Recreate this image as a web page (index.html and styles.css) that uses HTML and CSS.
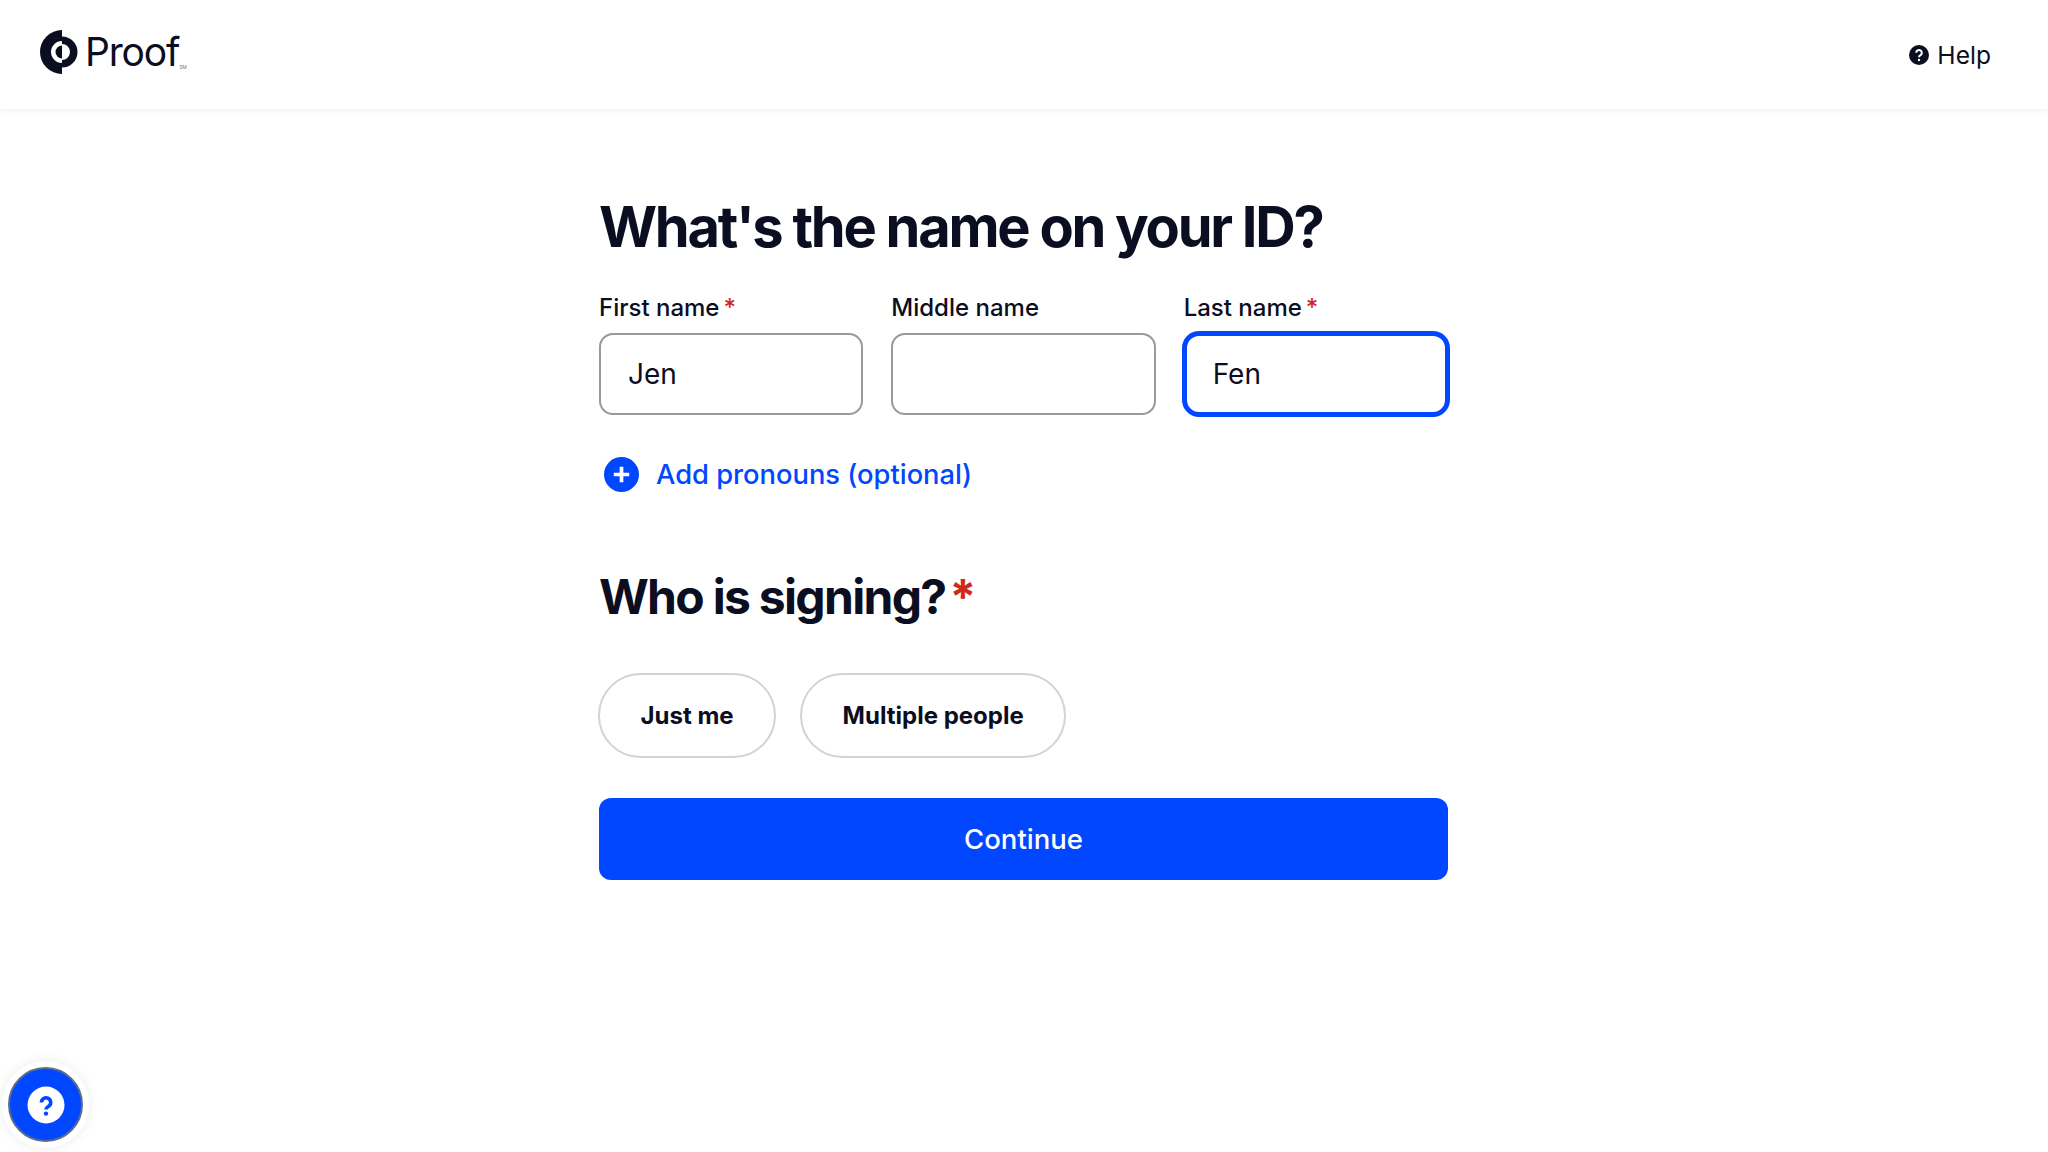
FILE: index.html
```html
<!DOCTYPE html>
<html lang="en">
<head>
  <meta charset="UTF-8">
  <title>Proof</title>
  <link rel="stylesheet" href="styles.css">
</head>
<body>

  <header class="topbar">
    <div class="logo">
      <svg class="logo-mark" width="38" height="46" viewBox="0 0 38 46">
        <path d="M22 1a22 22 0 0 0 0 44V34a11 11 0 0 1 0-22z" fill="#0b0e20"/>
        <path d="M22 7.5a15.5 15.5 0 0 1 0 31V31a8 8 0 0 0 0-16z" fill="#0b0e20"/>
        <path d="M22 16.5a6.5 6.5 0 0 0 0 13z" fill="#0b0e20"/>
      </svg>
      <span class="logo-text">Proof</span>
      <span class="logo-sm">SM</span>
    </div>
    <a class="help" href="#">
      <svg width="20" height="20" viewBox="0 0 20 20">
        <circle cx="10" cy="10" r="10" fill="#0b0e20"/>
        <path d="M7.2 7.8a2.8 2.8 0 1 1 4.3 2.4c-1 .6-1.5 1-1.5 2" fill="none" stroke="#fff" stroke-width="2"/>
        <circle cx="10" cy="15" r="1.2" fill="#fff"/>
      </svg>
      Help
    </a>
  </header>

  <main class="content">
    <h1>What's the name on your ID?</h1>

    <div class="name-fields">
      <div class="field">
        <label for="first">First name<span class="req">*</span></label>
        <input id="first" type="text" value="Jen">
      </div>
      <div class="field">
        <label for="middle">Middle name</label>
        <input id="middle" type="text">
      </div>
      <div class="field">
        <label for="last">Last name<span class="req">*</span></label>
        <input id="last" class="focused" type="text" value="Fen">
      </div>
    </div>

    <a class="add-pronouns" href="#">
      <svg width="35" height="35" viewBox="0 0 34 34">
        <circle cx="17" cy="17" r="17" fill="#0047ff"/>
        <path d="M17 9.5v15M9.5 17h15" stroke="#fff" stroke-width="3.6"/>
      </svg>
      Add pronouns (optional)
    </a>

    <h2>Who is signing?<span class="req">*</span></h2>

    <div class="choices">
      <button class="pill" type="button">Just me</button>
      <button class="pill" type="button">Multiple people</button>
    </div>

    <button class="continue" type="button">Continue</button>
  </main>

  <button class="support" type="button" aria-label="Support">
    <svg width="38" height="38" viewBox="0 0 38 38">
      <circle cx="19" cy="19" r="18.5" fill="#fff"/>
      <path d="M14.5 16.5a4.6 4.6 0 1 1 7.1 3.8c-1.6 1-2.6 1.5-2.6 3.2" fill="none" stroke="#0047ff" stroke-width="3.6"/>
      <circle cx="19" cy="27.6" r="2.2" fill="#0047ff"/>
    </svg>
  </button>

</body>
</html>
```

FILE: styles.css
```css
* {
  box-sizing: border-box;
}
body {
  margin: 0;
  height: 1152px;
  overflow: hidden;
  background: #fff;
  color: #0b0e20;
  font-family: Inter, sans-serif;
}
.topbar {
  height: 109px;
  display: flex;
  align-items: center;
  justify-content: space-between;
  padding: 0 57px 0 40px;
  box-shadow: 0 1px 8px rgba(0,0,0,0.07);
}
.logo {
  display: flex;
  align-items: center;
  margin-top: -6px;
}
.logo-mark {
  display: block;
}
.logo-text {
  margin: 1px 0 0 7px;
  font-family: Inter, sans-serif;
  font-size: 39px;
  letter-spacing: -1.2px;
  line-height: 44px;
}
.logo-sm {
  align-self: flex-end;
  font-size: 5px;
  margin-bottom: 5px;
  color: #777;
}
.help {
  display: flex;
  align-items: center;
  gap: 8px;
  color: #0b0e20;
  text-decoration: none;
  font-size: 24.6px;
}
.content {
  width: 849px;
  margin-left: 599px;
  padding-top: 84px;
}
h1 {
  margin: 0;
  font-size: 56px;
  line-height: 68px;
  font-weight: 700;
  letter-spacing: -2.25px;
}
.name-fields {
  display: flex;
  gap: 28px;
  margin-top: 31px;
}
.field {
  flex: 1;
  min-width: 0;
}
label {
  display: block;
  font-size: 24px;
  line-height: 32px;
  font-weight: 500;
  margin-bottom: 9px;
}
.req {
  color: #d0281a;
  margin-left: 4px;
}
input {
  display: block;
  width: 100%;
  height: 82px;
  padding: 0 27px;
  border: 2px solid #999;
  border-radius: 14px;
  outline: none;
  font-family: Inter, sans-serif;
  font-size: 28px;
  color: #0b0e20;
  background: #fff;
}
input.focused {
  border: 3px solid #0047ff;
  border-radius: 15px;
  box-shadow: 0 0 0 2px #0047ff;
  padding: 0 26px;
}
.add-pronouns {
  display: flex;
  align-items: center;
  gap: 17px;
  margin: 42px 0 0 5px;
  color: #0047ff;
  font-size: 27.3px;
  font-weight: 500;
  text-decoration: none;
}
h2 {
  margin: 75px 0 0;
  font-size: 48px;
  line-height: 60px;
  font-weight: 700;
  letter-spacing: -1.7px;
}
.choices {
  display: flex;
  gap: 24px;
  margin: 46px 0 0 -1px;
}
.pill {
  height: 85px;
  padding: 0 40.5px;
  border: 2px solid #d3d3d6;
  border-radius: 43px;
  background: #fff;
  color: #0b0e20;
  font-family: Inter, sans-serif;
  font-size: 24px;
  font-weight: 700;
}
.continue {
  display: block;
  width: 100%;
  height: 82px;
  margin-top: 40px;
  border: none;
  border-radius: 12px;
  background: #0047ff;
  color: #fff;
  font-family: Inter, sans-serif;
  font-size: 27.5px;
  font-weight: 500;
}
.support {
  position: absolute;
  left: 8px;
  bottom: 10px;
  width: 75px;
  height: 75px;
  display: flex;
  align-items: center;
  justify-content: center;
  padding: 0;
  border: 2px solid #5c6b8c;
  border-radius: 50%;
  background: #0047ff;
  box-shadow: 0 0 0 6px #fff, 0 0 12px 6px rgba(0,0,0,0.08);
}
```
